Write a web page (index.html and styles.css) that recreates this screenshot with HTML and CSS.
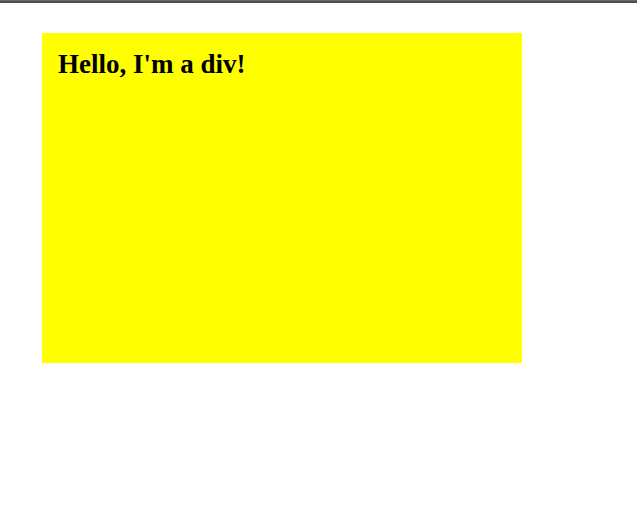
FILE: index.html
```html
<!DOCTYPE html>
<html>
<head>
<meta charset="utf-8">
<link rel="stylesheet" href="styles.css">
</head>
<body>
<div class="topbar"></div>
<main class="page">
  <div class="box">
    <h2 class="title">Hello, I'm a div!</h2>
  </div>
</main>
</body>
</html>
```
FILE: styles.css
```css
html, body {
  margin: 0;
  padding: 0;
  background: #ffffff;
}
.topbar {
  height: 3px;
  background: #4d4d4d;
  border-top: 1px solid #6a6a6a;
  box-sizing: border-box;
}
.page {
  padding: 30px 0 0 42px;
}
.box {
  width: 480px;
  height: 330px;
  background: #ffff00;
  padding: 16px;
  box-sizing: border-box;
}
.title {
  margin: 0;
  font-family: "Liberation Serif", "Times New Roman", serif;
  font-weight: bold;
  font-size: 27px;
  line-height: 30px;
  color: #000;
}
```
